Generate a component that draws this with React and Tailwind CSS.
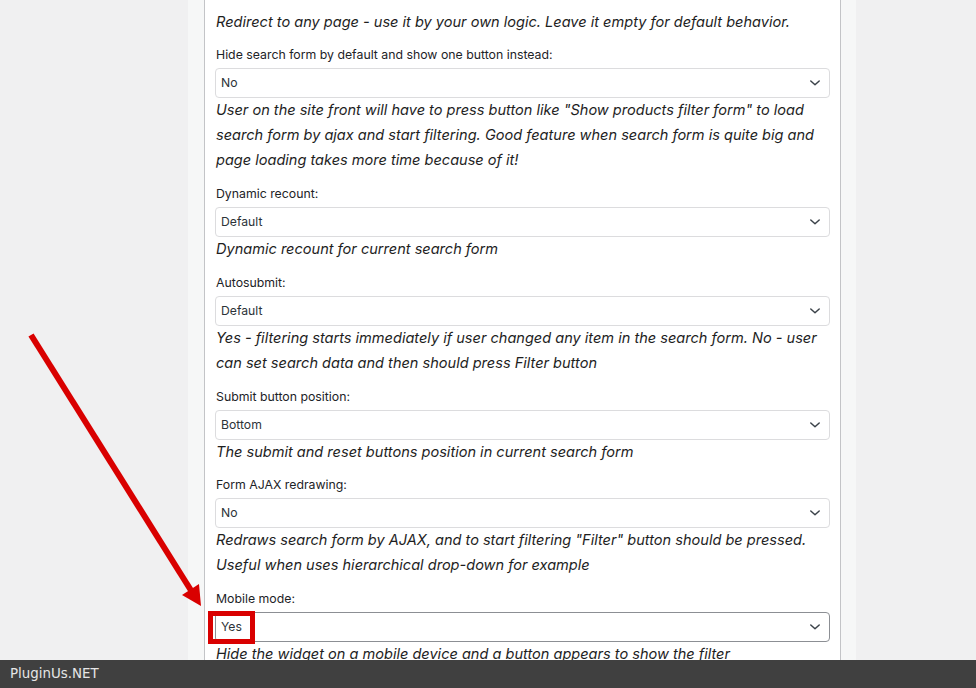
import React from "react";

const Chevron = () => (
  <svg width="12" height="8" viewBox="0 0 12 8" className="shrink-0">
    <path d="M1.8 2 L6 5.8 L10.2 2" fill="none" stroke="#3c434a" strokeWidth="1.5" strokeLinecap="round" strokeLinejoin="round" />
  </svg>
);

function Field({ label, value, desc, dark }) {
  return (
    <div className="mt-[11.8px]">
      <div className="text-[12.3px] leading-[18px] text-[#1d2327] pl-[1px] whitespace-nowrap">{label}</div>
      <div
        className={`mt-[4px] h-[30px] flex items-center justify-between rounded-[4px] border bg-white pl-[5px] pr-[8px] text-[12.2px] text-[#2c3338] ${
          dark ? "border-[#8c8f94]" : "border-[#dcdcde]"
        }`}
      >
        <span>{value}</span>
        <Chevron />
      </div>
      <div className="text-[14.55px] leading-[25px] italic text-[#1e1e1e] pl-[1px] whitespace-nowrap">{desc}</div>
    </div>
  );
}

export default function App() {
  return (
    <div
      className="relative w-[976px] h-[688px] overflow-hidden bg-[#f0f0f1]"
      style={{ fontFamily: "Inter, 'Noto Sans', sans-serif" }}
    >
      <div className="ml-[188px] w-[668px] h-full bg-[#f6f7f7] pl-[16px] pr-[15px]">
        <div className="h-full bg-white border-x border-[#c3c4c7] px-[10px] pt-[9.5px]">
          <div className="text-[14.55px] leading-[25px] italic text-[#1e1e1e] pl-[1px] whitespace-nowrap">
            Redirect to any page - use it by your own logic. Leave it empty for default behavior.
          </div>
          <Field
            label="Hide search form by default and show one button instead:"
            value="No"
            desc={
              <>
                User on the site front will have to press button like "Show products filter form" to load
                <br />
                search form by ajax and start filtering. Good feature when search form is quite big and
                <br />
                page loading takes more time because of it!
              </>
            }
          />
          <Field label="Dynamic recount:" value="Default" desc="Dynamic recount for current search form" />
          <Field
            label="Autosubmit:"
            value="Default"
            desc={
              <>
                Yes - filtering starts immediately if user changed any item in the search form. No - user
                <br />
                can set search data and then should press Filter button
              </>
            }
          />
          <Field
            label="Submit button position:"
            value="Bottom"
            desc="The submit and reset buttons position in current search form"
          />
          <Field
            label="Form AJAX redrawing:"
            value="No"
            desc={
              <>
                Redraws search form by AJAX, and to start filtering "Filter" button should be pressed.
                <br />
                Useful when uses hierarchical drop-down for example
              </>
            }
          />
          <Field
            label="Mobile mode:"
            value="Yes"
            dark
            desc="Hide the widget on a mobile device and a button appears to show the filter"
          />
        </div>
      </div>

      {/* annotation: red box */}
      <div className="absolute left-[208px] top-[611px] w-[47px] h-[33px] border-[5px] border-[#d90000]" />

      {/* annotation: arrow */}
      <svg className="absolute left-0 top-0 pointer-events-none" width="976" height="688">
        <line x1="31" y1="335" x2="192" y2="592" stroke="#d90000" strokeWidth="6" />
        <polygon points="201,606 182,595 199,584" fill="#d90000" />
      </svg>

      {/* bottom bar */}
      <div
        className="absolute left-0 right-0 bottom-0 h-[28px] bg-[#404040] flex items-center pl-[10px] text-[13.4px] text-[#e6e6e6]"
        style={{ fontFamily: "'DejaVu Sans', sans-serif" }}
      >
        PluginUs.NET
      </div>
    </div>
  );
}
